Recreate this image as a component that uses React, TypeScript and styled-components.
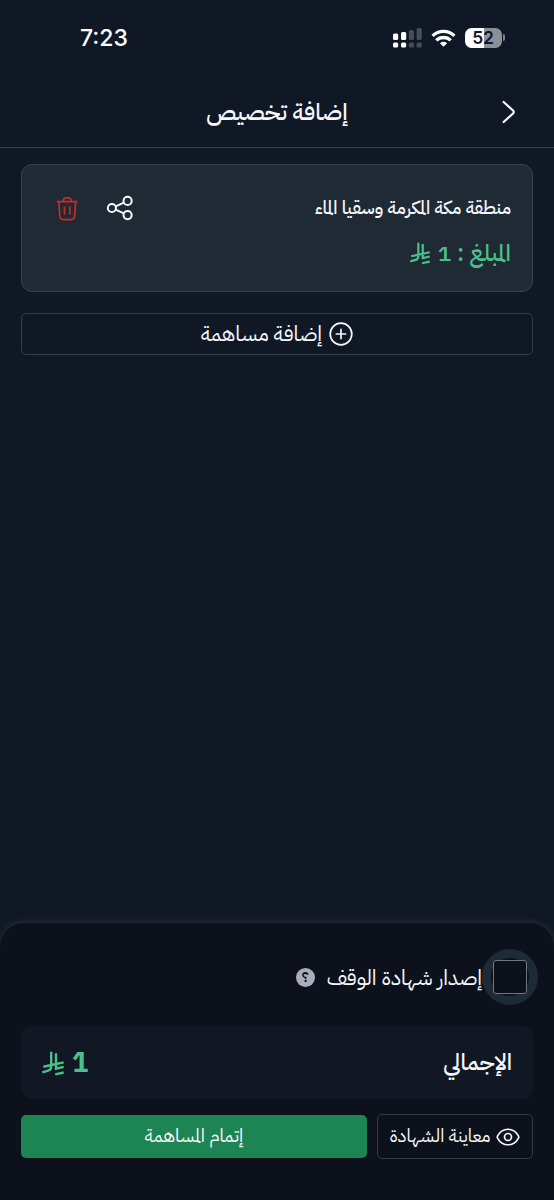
import React from "react";
import styled, { createGlobalStyle } from "styled-components";

const GlobalStyle = createGlobalStyle`
  * { box-sizing: border-box; }
  body {
    margin: 0;
    background: #111825;
    color: #f5f7fa;
    font-family: "IBM Plex Sans Arabic", "DejaVu Sans", sans-serif;
    font-feature-settings: "dlig" 1, "liga" 1;
  }
  button { font-feature-settings: inherit; }
  svg { display: block; flex: none; }
`;

const Screen = styled.div`
  display: flex;
  flex-direction: column;
  width: 554px;
  height: 1200px;
  overflow: hidden;
  background: #111825;
`;

const StatusBar = styled.div`
  display: flex;
  align-items: center;
  justify-content: space-between;
  height: 76px;
  padding: 0 48px 1px 80px;
`;

const Clock = styled.span`
  font: 500 23px/26px Inter, sans-serif;
  color: #fff;
`;

const StatusIcons = styled.div`
  display: flex;
  align-items: center;
  gap: 9px;
`;

const Header = styled.header`
  display: grid;
  grid-template-columns: 60px 1fr 60px;
  align-items: center;
  height: 72px;
  padding: 0 16px;
  border-bottom: 1px solid #3a414c;
`;

const BackButton = styled.button`
  display: flex;
  justify-content: center;
  padding: 0;
  border: 0;
  background: none;
  color: #f5f7fa;
`;

const Label = styled.span<{ $size: number; $weight?: number; $color?: string; $drop?: number }>`
  padding-top: ${(p) => p.$drop ?? 0}px;
  font-size: ${(p) => p.$size}px;
  font-weight: ${(p) => p.$weight ?? 400};
  color: ${(p) => p.$color ?? "#f5f7fa"};
  line-height: 1.4;
  white-space: nowrap;
`;

const Title = styled.h1`
  margin: 0;
  padding-top: 3px;
  font-size: 23.5px;
  font-weight: 500;
  line-height: 34px;
  text-align: center;
  white-space: nowrap;
`;

const Content = styled.main`
  display: flex;
  flex: 1;
  flex-direction: column;
  gap: 21px;
  padding: 16px 21px;
`;

const Card = styled.section`
  display: flex;
  justify-content: space-between;
  height: 128px;
  padding: 28px 21px 0 34px;
  border: 1px solid #39434e;
  border-radius: 11px;
  background: #1f2a35;
`;

const Details = styled.div`
  display: flex;
  flex-direction: column;
  gap: 14px;
`;

const DetailLine = styled.div`
  display: flex;
  align-items: center;
  height: 31px;
  gap: 7px;
`;

const Actions = styled.div`
  display: flex;
  align-items: center;
  height: 30px;
  gap: 28px;
`;

const OutlineButton = styled.button<{ $width: string; $height: number; $gap: number }>`
  display: flex;
  align-items: center;
  justify-content: center;
  flex: none;
  gap: ${(p) => p.$gap}px;
  width: ${(p) => p.$width};
  height: ${(p) => p.$height}px;
  padding: 0;
  border: 1px solid #343b47;
  border-radius: 5px;
  background: none;
  font-family: inherit;
  color: #f5f7fa;
`;

const Footer = styled.footer`
  display: flex;
  flex-direction: column;
  height: 277px;
  padding: 26px 21px 0;
  border-radius: 24px 24px 0 0;
  background: #0d111b;
  box-shadow: 0 -1px 6px 0 #2a313d;
`;

const CertificateRow = styled.div`
  display: flex;
  align-items: center;
  height: 56px;
  margin-right: -5px;
`;

const CheckboxHalo = styled.span`
  display: grid;
  place-items: center;
  flex: none;
  width: 56px;
  height: 56px;
  border: 9px solid #1e2a35;
  border-radius: 50%;
`;

const Checkbox = styled.span`
  flex: none;
  width: 34px;
  height: 34px;
  border: 1.5px solid #70757e;
  border-radius: 3px;
  background: #0d111b;
`;

const HelpBadge = styled.span`
  display: grid;
  place-items: center;
  width: 19px;
  height: 19px;
  margin-right: 12px;
  border-radius: 50%;
  background: #a9adb7;
  color: #0d111b;
  font-size: 14px;
  font-weight: 600;
  line-height: 19px;
`;

const TotalRow = styled.div`
  display: flex;
  align-items: center;
  justify-content: space-between;
  height: 73px;
  margin-top: 21px;
  padding: 2px 21px 0;
  border-radius: 10px;
  background: #111824;
`;

const Amount = styled.div`
  display: flex;
  align-items: center;
  gap: 8px;
`;

const ButtonRow = styled.div`
  display: flex;
  align-items: center;
  gap: 10px;
  margin-top: 15px;
`;

const PrimaryButton = styled.button`
  flex: 1;
  height: 43px;
  padding: 0;
  border: 0;
  border-radius: 5px;
  background: #1d8453;
  font-family: inherit;
`;

const SignalIcon = () => (
  <svg width="29" height="20" viewBox="0 0 29 20" fill="#fff">
    <rect x="0" y="5.5" width="5.2" height="6.5" rx="1.5" />
    <rect x="8" y="4" width="5.2" height="8" rx="1.5" />
    <g fill="#454b57">
      <rect x="15.8" y="2" width="5.2" height="10" rx="1.5" />
      <rect x="23.6" y="0" width="5.2" height="12" rx="1.5" />
      <rect x="15.8" y="14.5" width="5.2" height="5" rx="1.5" />
      <rect x="23.6" y="14.5" width="5.2" height="5" rx="1.5" />
    </g>
    <rect x="0" y="14.5" width="5.2" height="5" rx="1.5" />
    <rect x="8" y="14.5" width="5.2" height="5" rx="1.5" />
  </svg>
);

const WifiIcon = () => (
  <svg width="25" height="18" viewBox="0 0 26 19" fill="none" stroke="#fff" strokeWidth="3.5">
    <path d="M1.5 7.2a16.6 16.6 0 0 1 23 0" />
    <path d="M5.4 12a11 11 0 0 1 15.2 0" />
    <path d="M13 18.8 9.2 15a6 6 0 0 1 7.6 0z" fill="#fff" stroke="none" />
  </svg>
);

const BatteryBody = styled.span`
  display: grid;
  place-items: center;
  width: 37px;
  height: 20px;
  border-radius: 6.5px;
  background: linear-gradient(90deg, #fff 52%, #8b8f98 52%);
  color: #111825;
  font: 600 17.5px/20px Inter, sans-serif;
  letter-spacing: -0.3px;
`;

const Battery = styled.span`
  display: flex;
  align-items: center;
  gap: 1px;
  margin-right: 1px;

  &::after {
    content: "";
    width: 2.5px;
    height: 7px;
    border-radius: 0 3px 3px 0;
    background: #7d828b;
  }
`;

const ChevronIcon = () => (
  <svg width="15" height="24" viewBox="0 0 15 24" fill="none" stroke="currentColor" strokeWidth="2.2" strokeLinecap="round" strokeLinejoin="round">
    <path d="M2.6 2 11.8 10.2Q13.8 12 11.8 13.8L2.6 22" />
  </svg>
);

const ShareIcon = () => (
  <svg width="27" height="26" viewBox="0 0 27 26" fill="none" stroke="#f5f7fa" strokeWidth="2">
    <circle cx="5.9" cy="13" r="4.1" />
    <circle cx="21.6" cy="5.9" r="4.1" />
    <circle cx="21.6" cy="20.1" r="4.1" />
    <path d="m9.7 11.3 8.1-3.7M9.7 14.7l8.1 3.7" />
  </svg>
);

const TrashIcon = () => (
  <svg width="22" height="25" viewBox="0 0 22 25" fill="none" stroke="#c92a2a" strokeWidth="1.7" strokeLinecap="round" strokeLinejoin="round">
    <path d="M1.4 5.6h19.6M7.2 5.3V4.600Q7.600 1.800 10 1.800h2.400Q14.800 1.800 15.200 4.600v.7" />
    <path d="m2.800 6 1 14.300Q4.100 23.600 7.400 23.600h7.600q3.300 0 3.600-3.300L19.600 6M8.500 11.200v6.600M13.900 11.200v6.600" />
  </svg>
);

const PlusCircleIcon = () => (
  <svg width="24" height="24" viewBox="0 0 24 24" fill="none" stroke="currentColor" strokeWidth="1.7" strokeLinecap="round">
    <circle cx="12" cy="12" r="10.8" />
    <path d="M12 7.4v9.2M7.4 12h9.2" />
  </svg>
);

const EyeIcon = () => (
  <svg width="24" height="18" viewBox="0 0 24 18" fill="none" stroke="currentColor" strokeWidth="1.7" strokeLinejoin="round">
    <path d="M1.7 10.3Q.8 9 1.7 7.7C6.5-.9 17.5-.9 22.3 7.7Q23.2 9 22.3 10.3C17.5 18.9 6.5 18.9 1.7 10.3Z" />
    <circle cx="12" cy="9" r="3.5" />
  </svg>
);

const RiyalIcon = ({ size }: { size: number }) => (
  <svg width={size} height={size * 1.14} viewBox="0 0 22 25" fill="none" stroke="#4cc08b" strokeWidth="2.4">
    <path d="M9.2.7V15.5Q9.2 18.8 6.2 19.6L.3 21.3M1.3 15.7 21.7 11.3M14 2.2v15.4L21.7 15.9M13.2 23.4l8.500-1.900" />
  </svg>
);

export default function App() {
  return (
    <>
      <GlobalStyle />
      <Screen>
        <StatusBar>
          <Clock>7:23</Clock>
          <StatusIcons>
            <SignalIcon />
            <WifiIcon />
            <Battery>
              <BatteryBody>52</BatteryBody>
            </Battery>
          </StatusIcons>
        </StatusBar>
        <Header dir="rtl">
          <BackButton aria-label="رجوع">
            <ChevronIcon />
          </BackButton>
          <Title>إضافة تخصيص</Title>
        </Header>
        <Content dir="rtl">
          <Card>
            <Details>
              <DetailLine>
                <Label $size={18.3} $weight={500}>منطقة مكة المكرمة وسقيا الماء</Label>
              </DetailLine>
              <DetailLine>
                <Label $size={23.4} $weight={500} $color="#4cc08b" $drop={2}>المبلغ : 1</Label>
                <RiyalIcon size={20} />
              </DetailLine>
            </Details>
            <Actions>
              <ShareIcon />
              <TrashIcon />
            </Actions>
          </Card>
          <OutlineButton $width="100%" $height={42} $gap={7}>
            <PlusCircleIcon />
            <Label $size={21.2} $drop={2}>إضافة مساهمة</Label>
          </OutlineButton>
        </Content>
        <Footer dir="rtl">
          <CertificateRow>
            <CheckboxHalo>
              <Checkbox role="checkbox" aria-checked="false" />
            </CheckboxHalo>
            <Label $size={21.2} $drop={3}>إصدار شهادة الوقف</Label>
            <HelpBadge>؟</HelpBadge>
          </CertificateRow>
          <TotalRow>
            <Label $size={23} $weight={500}>الإجمالي</Label>
            <Amount>
              <Label $size={27} $weight={700} $color="#4cc08b" $drop={1}>1</Label>
              <RiyalIcon size={22} />
            </Amount>
          </TotalRow>
          <ButtonRow>
            <OutlineButton $width="156px" $height={45} $gap={6}>
              <EyeIcon />
              <Label $size={18.4}>معاينة الشهادة</Label>
            </OutlineButton>
            <PrimaryButton>
              <Label $size={18.6}>إتمام المساهمة</Label>
            </PrimaryButton>
          </ButtonRow>
        </Footer>
      </Screen>
    </>
  );
}
